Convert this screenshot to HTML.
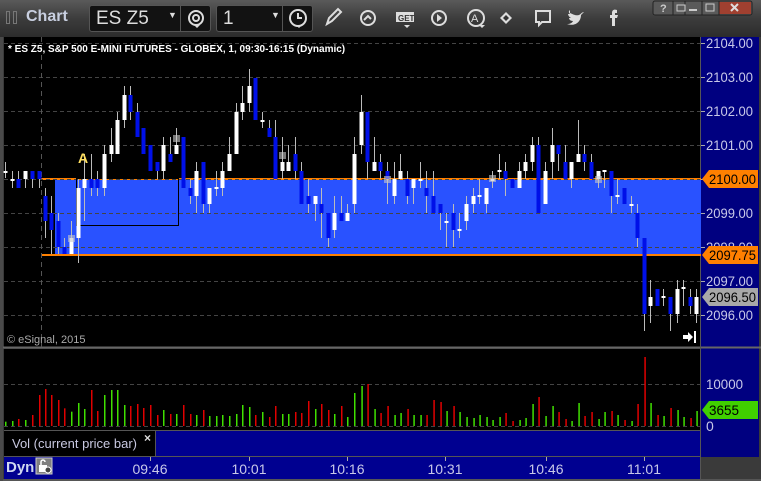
<!DOCTYPE html>
<html><head><meta charset="utf-8"><style>
*{margin:0;padding:0;box-sizing:border-box}
body{width:761px;height:481px;overflow:hidden;background:#3a3a3a;font-family:"Liberation Sans",Arial,sans-serif;position:relative}
.tb{position:absolute;left:0;top:0;width:761px;height:37px;background:linear-gradient(#5a5a5a,#3c3c3c 50%,#2c2c2c)}
.ab{position:absolute}
.box{position:absolute;background:#121212;border:1px solid #555;border-radius:3px;color:#ddd;font-size:19px}
</style></head><body>
<div class="tb"></div>
<div class="ab" style="left:6px;top:11px;width:4px;height:13px;border:1px solid #777"></div>
<div class="ab" style="left:13px;top:11px;width:4px;height:13px;border:1px solid #777"></div>
<div class="ab" style="left:26px;top:8px;color:#c8cfe0;font-weight:bold;font-size:16px">Chart</div>
<div class="box" style="left:89px;top:5px;width:122px;height:27px"><span style="position:absolute;left:6px;top:2px">ES Z5</span><span style="position:absolute;left:78px;top:4px;font-size:9px">▼</span><div style="position:absolute;left:90px;top:0;width:1px;height:25px;background:#555"></div></div>
<div class="box" style="left:216px;top:5px;width:97px;height:27px"><span style="position:absolute;left:6px;top:2px">1</span><span style="position:absolute;left:54px;top:4px;font-size:9px">▼</span><div style="position:absolute;left:65px;top:0;width:1px;height:25px;background:#555"></div></div>
<svg class="ab" style="left:0;top:0" width="761" height="37">
<g fill="none" stroke="#ddd" stroke-width="2">
<circle cx="196" cy="18" r="7"/><circle cx="196" cy="18" r="3"/>
<circle cx="298" cy="18" r="8"/><path d="M298 13v5h4"/>
<path d="M327 24l2-6 9-9 3 3-9 9z"/>
<circle cx="368" cy="18" r="7"/><path d="M364 20l4-4 3 3"/>
<circle cx="439" cy="18" r="7"/>
<circle cx="476" cy="18" r="8"/>
<path d="M536 11h14v11h-8l-3 3v-3h-3z"/>
</g>
<rect x="396" y="12" width="18" height="10" fill="#ddd"/><text x="398" y="21" font-size="8" font-weight="bold" fill="#333" font-family="Liberation Sans">GET</text>
<path d="M437 14v8l5-4z" fill="#ddd"/>
<text x="471" y="22" font-size="11" fill="#ddd" font-family="Liberation Sans">A</text>
<path d="M500 18l6-6 6 6-6 6z" fill="#ddd"/><path d="M503 18l3 3 3-3-3-3z" fill="#333"/>
<path d="M570 13c3 1 5 3 9 2 2-1 3-3 5-3-1 1-2 2-3 3 0 6-5 12-14 9 3 0 5-1 6-3-3 0-4-2-4-3h2c-2-1-3-3-3-4h2c-2-2-1-3 0-4z" fill="#ddd"/>
<path d="M612 26v-8h-2v-3h2v-2c0-3 2-4 5-3v3h-2v2h3l-1 3h-2v8z" fill="#ddd"/>
<path d="M194 25l3 3 3-3zM296 25l3 3 3-3zM404 25l3 3 3-3zM479 25l3 3 3-3z" fill="#ddd"/>
<rect x="653" y="1" width="99" height="14" rx="2" fill="#5a5a5a" stroke="#222"/>
<rect x="719" y="2" width="32" height="12" fill="#a04030"/>
<path d="M673 1v14M685 1v14M702 1v14M719 1v14" stroke="#222"/>
<text x="660" y="12" font-size="11" fill="#ccc" font-family="Liberation Sans" font-weight="bold">?</text>
<rect x="677" y="5" width="8" height="6" fill="none" stroke="#ccc"/>
<rect x="689" y="9" width="8" height="2" fill="#ccc"/>
<rect x="706" y="4" width="8" height="7" fill="none" stroke="#ccc"/>
<path d="M731 4l7 7M738 4l-7 7" stroke="#ddd" stroke-width="2"/>
</svg>
<svg id="c" class="ab" style="left:0;top:37px" width="761" height="444" viewBox="0 37 761 444"></svg>
<script>
var s='';
function R(x,y,w,h,f){s+='<rect x="'+x+'" y="'+y+'" width="'+w+'" height="'+h+'" fill="'+f+'"/>';}
function L(x1,y1,x2,y2,c,w,d){s+='<line x1="'+x1+'" y1="'+y1+'" x2="'+x2+'" y2="'+y2+'" stroke="'+c+'" stroke-width="'+(w||1)+'"'+(d?' stroke-dasharray="'+d+'"':'')+'/>';}
function T(x,y,t,c,sz,a,b,tl){s+='<text x="'+x+'" y="'+y+'" fill="'+c+'" font-size="'+sz+'" font-family="Liberation Sans"'+(a?' text-anchor="'+a+'"':'')+(b?' font-weight="bold"':'')+(tl?' textLength="'+tl+'" lengthAdjust="spacingAndGlyphs"':'')+'>'+t+'</text>';}
R(0,37,761,444,'#3a3a3a');
R(4,37,697,310,'#000');
R(701,37,58,420,'#000080');
R(4,349,697,82,'#000');
R(4,431,151,25,'#000');R(155,431,546,25,'#000090');
R(4,457,697,22,'#000090');
L(0,347.5,761,347.5,'#666',2);L(700.5,37,700.5,480,'#555',1);
L(4,456.5,701,456.5,'#555',1);L(155.5,431,155.5,456,'#555',1);L(4,430.5,701,430.5,'#555',1);
R(0,479,761,2,'#555');R(0,37,3,444,'#4a4a4a');
R(55,179,646,76,'#2952ff');
R(41,178,660,2,'#ff8000');R(41,254,660,2,'#ff8000');
for(var p=0;p<9;p++){var y=43+p*34;L(4,y+.5,700,y+.5,'#444',1,'4,3');}
L(41.5,37,41.5,347,'#555',1,'5,4');
L(4,384.5,700,384.5,'#444',1,'4,3');L(4,426.5,700,426.5,'#444',1,'4,3');
s+='<rect x="76.5" y="178.5" width="102" height="47" fill="none" stroke="#000"/>';
var C=[[5,171,173,162,178,'d'],[12,179,181,171,188,'d'],[18,179,188,171,188,'b'],[25,171,179,171,188,'w'],[32,171,179,171,188,'b'],[39,171,179,171,188,'b'],[45,196,221,188,238,'b'],[51,213,230,196,254,'b'],[58,221,247,213,254,'b'],[64,247,254,238,254,'b'],[71,238,254,221,254,'w'],[78,188,238,179,263,'w'],[84,179,188,154,221,'w'],[91,179,188,154,196,'b'],[97,179,188,171,196,'b'],[104,154,188,145,196,'w'],[111,145,154,128,162,'w'],[117,120,154,112,154,'w'],[124,95,120,86,128,'w'],[130,95,112,86,120,'b'],[137,112,137,103,137,'b'],[143,128,154,128,154,'b'],[150,145,171,145,171,'b'],[157,162,171,162,179,'b'],[163,145,171,137,179,'w'],[170,154,162,137,162,'b'],[176,145,154,128,154,'w'],[183,137,188,137,188,'b'],[190,188,196,179,204,'b'],[196,171,196,162,213,'w'],[203,162,204,162,213,'b'],[209,188,204,188,213,'w'],[216,187,189,171,196,'d'],[222,171,188,162,196,'w'],[229,154,171,137,171,'w'],[236,112,154,103,154,'w'],[242,103,112,86,120,'w'],[249,86,103,69,112,'w'],[255,78,120,78,120,'b'],[262,120,122,112,128,'d'],[269,128,137,120,137,'b'],[275,137,179,120,179,'b'],[282,162,171,137,179,'w'],[288,162,171,145,171,'w'],[295,154,171,137,179,'b'],[301,171,204,162,204,'b'],[308,196,204,179,213,'b'],[315,196,204,196,221,'w'],[321,204,213,188,238,'b'],[328,213,238,213,247,'b'],[334,213,230,196,238,'w'],[341,213,221,196,221,'b'],[347,213,221,204,221,'w'],[354,154,204,137,213,'w'],[361,112,145,95,154,'w'],[367,112,162,112,179,'b'],[374,162,171,137,171,'w'],[380,162,171,154,179,'b'],[387,171,179,162,204,'b'],[394,179,196,162,204,'w'],[400,171,179,154,179,'w'],[407,179,196,171,204,'b'],[413,179,188,179,204,'w'],[420,179,181,162,188,'d'],[426,188,196,171,213,'b'],[433,196,213,171,213,'b'],[440,204,213,204,230,'b'],[446,221,223,213,247,'d'],[453,213,230,204,247,'b'],[459,229,231,213,238,'d'],[466,204,221,196,230,'w'],[473,196,204,188,213,'w'],[479,195,197,179,204,'d'],[486,188,204,188,213,'w'],[492,179,181,171,188,'d'],[499,170,172,154,179,'d'],[505,171,179,162,196,'b'],[512,179,188,179,188,'b'],[519,171,188,162,188,'w'],[525,162,171,154,179,'w'],[532,145,162,137,171,'w'],[538,145,213,137,213,'b'],[545,171,204,162,204,'w'],[552,145,162,128,179,'w'],[558,145,154,145,171,'b'],[565,162,179,145,179,'b'],[571,162,179,162,188,'w'],[578,154,162,120,162,'w'],[584,154,162,145,171,'b'],[591,162,179,154,179,'b'],[598,171,179,171,188,'w'],[604,170,172,171,188,'d'],[611,171,196,171,213,'b'],[617,195,197,179,204,'d'],[624,188,204,188,204,'b'],[631,204,206,196,213,'d'],[637,213,238,204,247,'b'],[644,238,314,238,331,'b'],[650,297,306,280,323,'w'],[657,289,306,289,306,'b'],[663,296,298,289,306,'d'],[670,297,314,297,331,'b'],[677,289,314,280,323,'w'],[683,287,289,280,306,'d'],[690,297,306,289,314,'b'],[696,297,314,289,323,'w']];
C.forEach(function(c){var x=c[0];L(x+.5,c[3],x+.5,c[4],'#bbb',1);
 var col=c[5]=='b'?'#0010e8':'#fff';var h=Math.max(2,c[2]-c[1]);R(x-1.5,c[1],4,h,col);});
[[71,238],[176,138],[282,155],[387,179],[492,178],[598,179]].forEach(function(g){R(g[0]-3,g[1]-3,7,7,'rgba(200,200,200,0.6)');});
T(78,163,'A','#ffe060',14,'',1);
var V1=[[5,245,'g'],[12,243,'g'],[18,237,'r'],[25,240,'g'],[32,225,'r'],[39,165,'r'],[45,147,'r'],[51,165,'r'],[58,180,'r'],[64,205,'r'],[71,215,'g'],[78,189,'g'],[84,207,'g'],[91,150,'r'],[97,213,'r'],[104,165,'g'],[111,150,'g'],[117,150,'g'],[124,195,'g'],[130,198,'r'],[137,192,'r'],[143,204,'r'],[150,195,'r'],[157,225,'r'],[163,210,'g'],[170,222,'r'],[176,222,'g'],[183,195,'r'],[190,222,'r'],[196,225,'g'],[203,210,'r'],[209,228,'g'],[216,228,'g'],[222,225,'g'],[229,228,'g'],[236,222,'g'],[242,195,'g'],[249,201,'g'],[255,225,'r'],[262,216,'g'],[269,231,'r'],[275,198,'r'],[282,222,'g'],[288,222,'g'],[295,216,'r'],[301,219,'r'],[308,183,'r'],[315,207,'g'],[321,192,'r'],[328,210,'r'],[334,222,'g'],[341,198,'r'],[347,231,'g'],[354,159,'g']];
V1.forEach(function(v){var h=(258-v[1])/3;R(v[0],426-h,1.5,h,v[2]=='g'?'#40e000':'#e00000');});
var V2=[[4,108,'g'],[22,102,'r'],[43,177,'g'],[61,189,'r'],[82,168,'r'],[103,195,'g'],[121,189,'g'],[142,177,'r'],[160,195,'g'],[181,195,'g'],[199,195,'r'],[220,150,'r'],[241,156,'r'],[259,183,'g'],[280,168,'r'],[298,186,'g'],[319,201,'g'],[340,204,'g'],[358,195,'g'],[379,201,'g'],[397,210,'g'],[418,201,'g'],[436,189,'r'],[457,213,'r'],[478,210,'g'],[496,204,'g'],[517,162,'g'],[535,141,'r'],[556,198,'g'],[577,168,'g'],[595,186,'r'],[616,207,'r'],[634,213,'g'],[655,159,'g'],[673,198,'r'],[694,186,'r'],[715,207,'g'],[733,186,'g'],[754,183,'r'],[772,195,'g'],[793,210,'r'],[814,213,'g'],[832,162,'r'],[853,21,'r'],[871,159,'g'],[892,195,'r'],[910,198,'g'],[931,174,'r'],[952,180,'g'],[970,201,'g'],[991,204,'r'],[1009,183,'g']];
V2.forEach(function(v){var h=(228-v[1])/3;R(360+v[0]/3,426-h,1.5,h,v[2]=='g'?'#40e000':'#e00000');});
var P=['2104.00','2103.00','2102.00','2101.00','2100.00','2099.00','2098.00','2097.00','2096.00'];
P.forEach(function(t,i){L(701,43+i*34+.5,705,43+i*34+.5,'#aaa');T(706,48+i*34,t,'#c8c8e8',14,'','',47);});
function tag(y,t,bg,fc,w,tl){s+='<path d="M702 '+y+'l7-9h'+(w-7)+'v18h-'+(w-7)+'z" fill="'+bg+'"/>';T(709,y+5,t,fc,14,'','',tl);}
tag(179,'2100.00','#ff8000','#000',56,47);tag(255,'2097.75','#ff8000','#000',56,47);tag(297,'2096.50','#a8a8a8','#000',56,47);
T(706,389,'10000','#c8c8e8',14,'','',37);T(706,431,'0','#c8c8e8',14);
tag(410,'3655','#40d000','#000',56,30);
T(8,52,'* ES Z5, S&amp;P 500 E-MINI FUTURES - GLOBEX, 1, 09:30-16:15 (Dynamic)','#fff',10,'',1);
T(7,343,'© eSignal, 2015','#aaa',11);
s+='<path d="M683 335h5v-3l5 5-5 5v-3h-5z" fill="#fff"/>';R(694,331,2,12,'#fff');
T(12,448,'Vol (current price bar)','#c8c8e0',13);T(144,442,'×','#ddd',12,'',1);
T(6,472,'Dyn','#d0d8f0',15,'',1);
s+='<rect x="36" y="458" width="16" height="16" fill="#808080" stroke="#ccc"/><rect x="39" y="465" width="8" height="7" fill="#fff"/><path d="M41 465v-3a2 2 0 0 1 4 0" stroke="#fff" fill="none" stroke-width="1.5"/><circle cx="48" cy="470" r="3" fill="#444" stroke="#fff"/>';
[[150,'09:46'],[249,'10:01'],[347,'10:16'],[445,'10:31'],[546,'10:46'],[644,'11:01']].forEach(function(t){L(t[0]+.5,457,t[0]+.5,461,'#aaa');T(t[0],474,t[1],'#c8c8e8',14,'middle');});
document.getElementById('c').innerHTML=s;
</script>
</body></html>
